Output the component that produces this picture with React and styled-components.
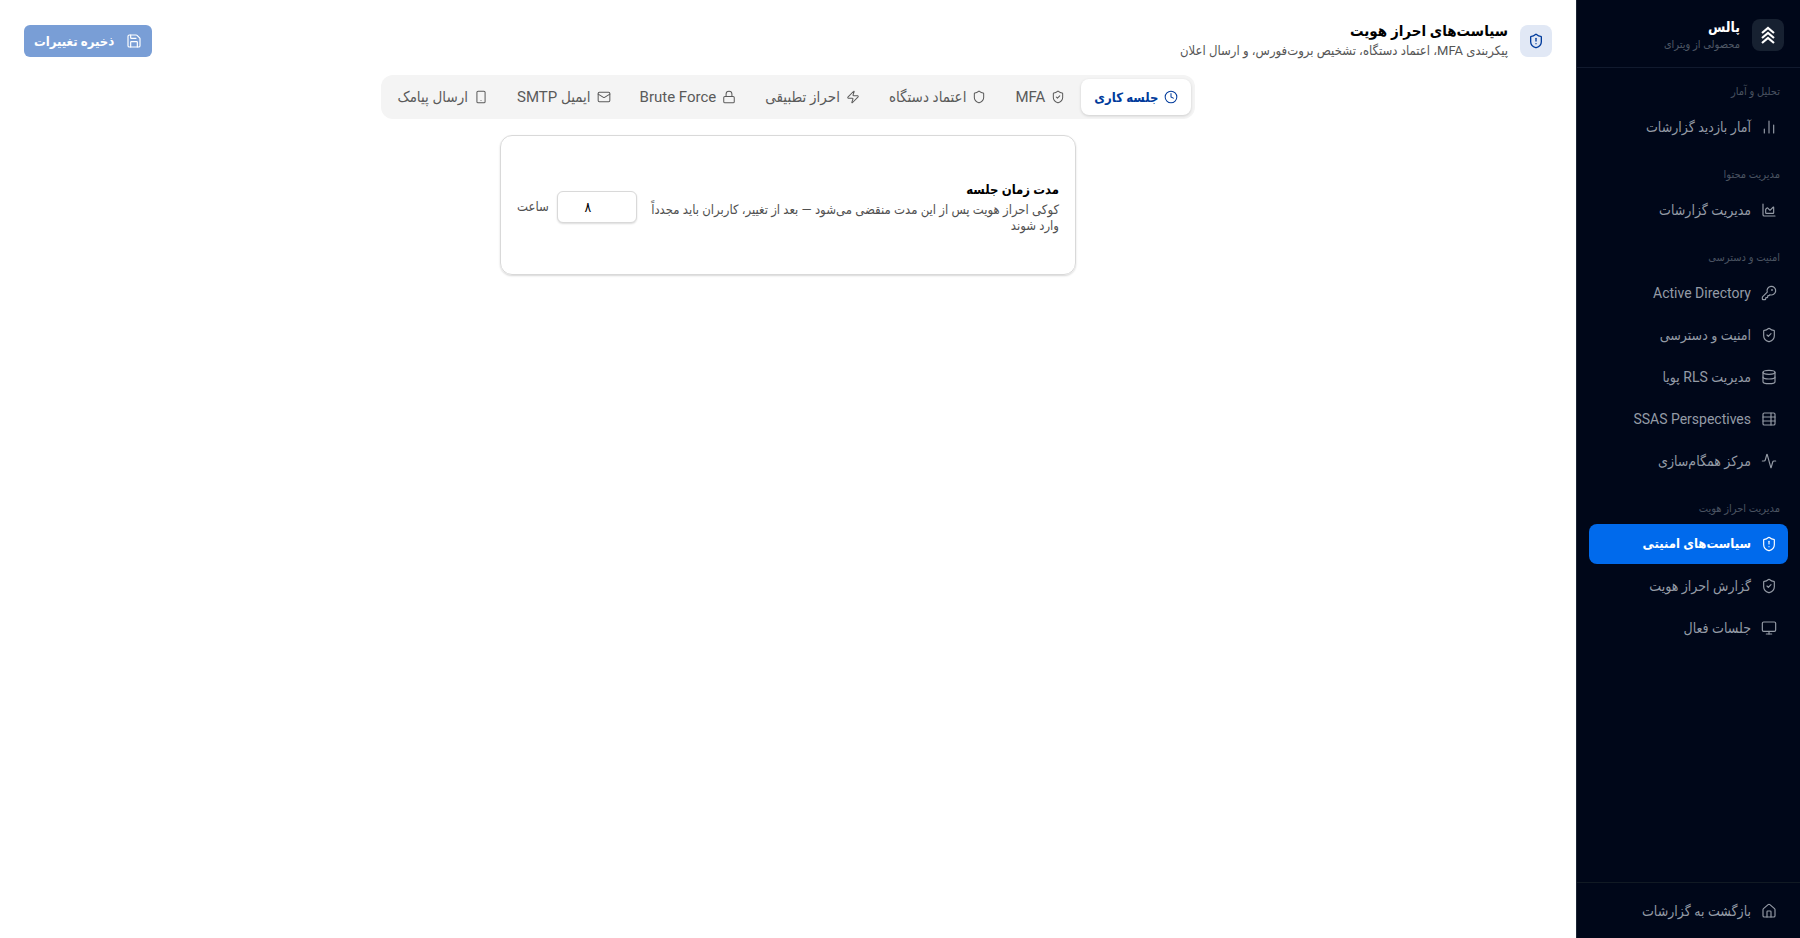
import React, { useState } from 'react'
import styled, { createGlobalStyle } from 'styled-components'
import {
    Activity, ChartArea, ChartNoAxesColumn, Clock, Database, House, KeyRound, Lock, Mail,
    Monitor, Save, Shield, ShieldAlert, ShieldCheck, Smartphone, TableProperties, Zap,
} from 'lucide-react'

const navGroups = [
    { title: 'تحلیل و آمار', items: [{ label: 'آمار بازدید گزارشات', icon: ChartNoAxesColumn }] },
    { title: 'مدیریت محتوا', items: [{ label: 'مدیریت گزارشات', icon: ChartArea }] },
    {
        title: 'امنیت و دسترسی',
        items: [
            { label: 'Active Directory', icon: KeyRound },
            { label: 'امنیت و دسترسی', icon: ShieldCheck },
            { label: 'مدیریت RLS پویا', icon: Database },
            { label: 'SSAS Perspectives', icon: TableProperties },
            { label: 'مرکز همگام‌سازی', icon: Activity },
        ],
    },
    {
        title: 'مدیریت احراز هویت',
        items: [
            { label: 'سیاست‌های امنیتی', icon: ShieldAlert, active: true },
            { label: 'گزارش احراز هویت', icon: ShieldCheck },
            { label: 'جلسات فعال', icon: Monitor },
        ],
    },
]

const tabs = [
    { label: 'جلسه کاری', icon: Clock },
    { label: 'MFA', icon: ShieldCheck },
    { label: 'اعتماد دستگاه', icon: Shield },
    { label: 'احراز تطبیقی', icon: Zap },
    { label: 'Brute Force', icon: Lock },
    { label: 'ایمیل SMTP', icon: Mail },
    { label: 'ارسال پیامک', icon: Smartphone },
]

function Sidebar() {
    return (
        <SideBar>
            <Brand>
                <Logo>
                    <svg width='16' height='18' viewBox='0 0 16 18' fill='none' stroke='currentColor' strokeWidth='2.2'>
                        <path d='M2 7l6-5 6 5M2 12l6-5 6 5M2 17l6-5 6 5' />
                    </svg>
                </Logo>
                <div>
                    <BrandName>پالس</BrandName>
                    <BrandNote>محصولی از ویترای</BrandNote>
                </div>
            </Brand>
            <Nav>
                {navGroups.map(group => (
                    <NavGroup key={group.title}>
                        <GroupTitle>{group.title}</GroupTitle>
                        {group.items.map(({ label, icon: Icon, active }) => (
                            <NavLink href='#' key={label} $active={active}>
                                <Icon size={16} strokeWidth={1.75} />
                                {label}
                            </NavLink>
                        ))}
                    </NavGroup>
                ))}
            </Nav>
            <SideFooter>
                <NavLink href='#'>
                    <House size={16} strokeWidth={1.75} />
                    بازگشت به گزارشات
                </NavLink>
            </SideFooter>
        </SideBar>
    )
}

export default function App() {
    const [tab, setTab] = useState(0)
    const [hours, setHours] = useState('۸')

    return (
        <Page dir='rtl'>
            <GlobalStyle />
            <Sidebar />
            <Main>
                <Header>
                    <HeaderIcon><ShieldAlert size={16} strokeWidth={2} /></HeaderIcon>
                    <HeaderText>
                        <Title>سیاست‌های احراز هویت</Title>
                        <Subtitle>پیکربندی MFA، اعتماد دستگاه، تشخیص بروت‌فورس، و ارسال اعلان</Subtitle>
                    </HeaderText>
                    <SaveButton type='button' disabled>
                        <Save size={16} strokeWidth={1.75} />
                        ذخیره تغییرات
                    </SaveButton>
                </Header>
                <Tabs role='tablist'>
                    {tabs.map(({ label, icon: Icon }, i) => (
                        <Tab
                            key={label}
                            type='button'
                            role='tab'
                            aria-selected={tab === i}
                            $active={tab === i}
                            onClick={() => setTab(i)}
                        >
                            <Icon size={14} strokeWidth={1.75} />
                            {label}
                        </Tab>
                    ))}
                </Tabs>
                <Card>
                    <Setting>
                        <SettingLabel htmlFor='hours'>مدت زمان جلسه</SettingLabel>
                        <SettingHint>
                            کوکی احراز هویت پس از این مدت منقضی می‌شود — بعد از تغییر، کاربران باید مجدداً وارد شوند
                        </SettingHint>
                    </Setting>
                    <HoursInput id='hours' value={hours} onChange={e => setHours(e.target.value)} />
                    <Unit>ساعت</Unit>
                </Card>
            </Main>
        </Page>
    )
}

const GlobalStyle = createGlobalStyle`
    * {
        box-sizing: border-box;
    }

    body {
        margin: 0;
        background: #fff;
        font-family: Roboto, 'DejaVu Sans Condensed', 'DejaVu Sans', sans-serif;
    }

    button, input {
        font-family: inherit;
    }
`

const Page = styled.div`
    display: flex;
    min-height: 100vh;
`

const SideBar = styled.aside`
    width: 224px;
    flex-shrink: 0;
    display: flex;
    flex-direction: column;
    background: #000719;
    border-left: 1px solid #1c2534;
    color: #949ba6;
`

const Brand = styled.div`
    display: flex;
    gap: 12px;
    height: 68px;
    padding: 19px 16px 0;
    border-bottom: 1px solid #111a2e;
`

const Logo = styled.div`
    width: 32px;
    height: 32px;
    display: flex;
    align-items: center;
    justify-content: center;
    border-radius: 8px;
    background: #172131;
    color: #fff;
`

const BrandName = styled.div`
    font-size: 14px;
    font-weight: 700;
    line-height: 16px;
    color: #fff;
`

const BrandNote = styled.div`
    margin-top: 2px;
    font-size: 11px;
    line-height: 16px;
    color: #4f5866;
`

const Nav = styled.nav`
    flex: 1;
    padding: 12px;
`

const NavGroup = styled.div`
    display: flex;
    flex-direction: column;
    gap: 2px;
    margin-bottom: 16px;
`

const GroupTitle = styled.div`
    padding: 4px 8px 6px;
    font-size: 11px;
    line-height: 15px;
    color: #4a5361;
`

const NavLink = styled.a`
    display: flex;
    align-items: center;
    gap: 10px;
    height: 40px;
    padding: 0 11px;
    border-radius: 8px;
    font-size: ${({ $active }) => ($active ? 13 : 14)}px;
    font-weight: ${({ $active }) => ($active ? 700 : 400)};
    line-height: 20px;
    white-space: nowrap;
    text-decoration: none;
    color: ${({ $active }) => ($active ? '#fff' : 'inherit')};
    background: ${({ $active }) => ($active ? '#006aec' : 'transparent')};
`

const SideFooter = styled.div`
    height: 56px;
    padding: 8px 12px;
    border-top: 1px solid #111a24;
`

const Main = styled.main`
    flex: 1;
    min-width: 0;
    display: flex;
    flex-direction: column;
    align-items: center;
    padding: 20px 24px;
`

const Header = styled.header`
    align-self: stretch;
    display: flex;
    align-items: center;
    gap: 12px;
    height: 42px;
`

const HeaderIcon = styled.div`
    width: 32px;
    height: 32px;
    display: flex;
    align-items: center;
    justify-content: center;
    border-radius: 8px;
    background: #e1e8f5;
    color: #003b9c;
`

const HeaderText = styled.div`
    flex: 1;
`

const Title = styled.h1`
    margin: 0;
    font-size: 15px;
    font-weight: 700;
    line-height: 18px;
    color: #000;
`

const Subtitle = styled.p`
    margin: 2px 0 0;
    font-size: 13px;
    line-height: 18px;
    color: #555;
`

const SaveButton = styled.button`
    display: flex;
    align-items: center;
    gap: 12px;
    height: 32px;
    padding: 0 10px;
    border: 0;
    border-radius: 6px;
    font-size: 13px;
    font-weight: 700;
    color: #fff;
    background: #799ed6;
`

const Tabs = styled.div`
    display: flex;
    gap: 3px;
    margin-top: 13px;
    padding: 4px;
    border-radius: 12px;
    background: #f4f4f4;
`

const Tab = styled.button`
    display: flex;
    align-items: center;
    gap: 6px;
    height: 36px;
    padding: 0 13px;
    border: 0;
    border-radius: 8px;
    font-size: ${({ $active }) => ($active ? 13 : 15)}px;
    font-weight: ${({ $active }) => ($active ? 700 : 400)};
    color: ${({ $active }) => ($active ? '#003b9c' : '#5a5a5a')};
    background: ${({ $active }) => ($active ? '#fff' : 'transparent')};
    box-shadow: ${({ $active }) => ($active ? '0 1px 3px rgba(0, 0, 0, 0.16)' : 'none')};
    white-space: nowrap;
`

const Card = styled.section`
    display: flex;
    align-items: center;
    width: 100%;
    max-width: 576px;
    margin-top: 16px;
    padding: 44px 16px 40px;
    border: 1px solid #d9d9d9;
    border-radius: 12px;
    box-shadow: 0 1px 2px rgba(0, 0, 0, 0.16);
`

const Setting = styled.div`
    flex: 1;
`

const SettingLabel = styled.label`
    display: block;
    font-size: 13px;
    font-weight: 700;
    line-height: 20px;
    color: #000;
`

const SettingHint = styled.p`
    margin: 2px 0 0;
    font-size: 13px;
    line-height: 16px;
    color: #505050;
`

const HoursInput = styled.input`
    width: 80px;
    height: 32px;
    margin: 0 12px 0 8px;
    padding: 0 26px 0 8px;
    border: 1px solid #d9d9d9;
    border-radius: 6px;
    font-size: 14px;
    text-align: center;
    color: #000;
    background: #fff;
    box-shadow: 0 1px 2px rgba(0, 0, 0, 0.14);
`

const Unit = styled.span`
    font-size: 13px;
    line-height: 16px;
    color: #505050;
`
